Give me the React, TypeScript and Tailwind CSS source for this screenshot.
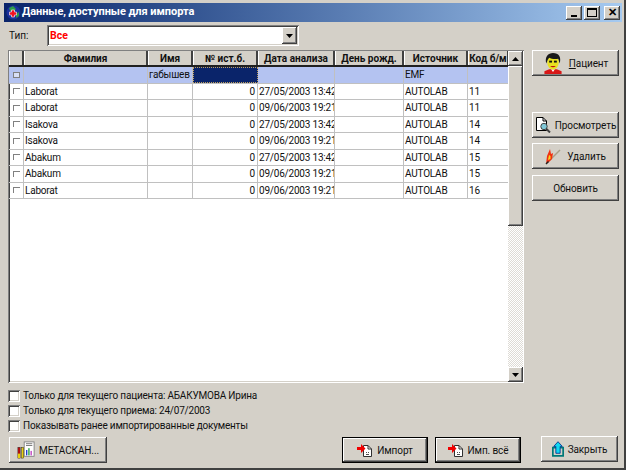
const raised =
  "shadow-[inset_-1px_-1px_0_#404040,inset_1px_1px_0_#ffffff,inset_-2px_-2px_0_#808080]";
const sunken =
  "shadow-[inset_1px_1px_0_#808080,inset_-1px_-1px_0_#ffffff,inset_2px_2px_0_#404040,inset_-2px_-2px_0_#d4d0c8]";

const columnGrid = "grid grid-cols-[15px_124px_45px_65px_77px_69px_64px_41px]";

const columns = ["", "Фамилия", "Имя", "№ ист.б.", "Дата анализа", "День рожд.", "Источник", "Код б/м"];

const rows = [
  ["Laborat", "27/05/2003 13:42:", "11"],
  ["Laborat", "09/06/2003 19:21:", "11"],
  ["Isakova", "27/05/2003 13:42:", "14"],
  ["Isakova", "09/06/2003 19:21:", "14"],
  ["Abakum", "27/05/2003 13:42:", "15"],
  ["Abakum", "09/06/2003 19:21:", "15"],
  ["Laborat", "09/06/2003 19:21:", "16"],
];

function AppIcon() {
  return (
    <svg width="15" height="15" viewBox="0 0 15 15" className="shrink-0">
      <circle cx="7.5" cy="7.5" r="7" fill="#1a2f9c" />
      <path d="M3 3 L7 1 L10 4 L8 6 L4 6 Z" fill="#2f9a4a" />
      <path d="M10 9 L13 7 L13 11 L10 13 Z" fill="#2f9a4a" />
      <path d="M5.5 5 h3 v2 h2 v3 h-2 v2 h-3 v-2 h-2 v-3 h2 Z" fill="#f01020" stroke="#ffffff" strokeWidth="0.6" />
    </svg>
  );
}

function FaceIcon() {
  return (
    <svg width="20" height="21" viewBox="0 0 20 22" className="shrink-0">
      <path d="M1 22 V19 L6 17 H14 L19 19 V22 Z" fill="#d81818" />
      <path d="M8 17 L10 20 L12 17 Z" fill="#ffffff" />
      <ellipse cx="10" cy="10" rx="6" ry="7.5" fill="#e8e020" />
      <path d="M3 11 C1 4 5 0 10 0 C16 0 19 4 17 11 L15.5 6 C12 7 8 6 6 5 L4.5 7 Z" fill="#1a1a1a" />
      <rect x="6" y="8" width="3" height="2" fill="#111111" />
      <rect x="11" y="8" width="3" height="2" fill="#111111" />
      <path d="M7 13.5 Q10 16.5 13 13.5 Z" fill="#c01010" />
    </svg>
  );
}

function ViewIcon() {
  return (
    <svg width="16" height="16" viewBox="0 0 16 16" className="shrink-0">
      <path d="M1.5 0.5 H8 L11.5 4 V13.5 H1.5 Z" fill="#ffffff" stroke="#000000" />
      <path d="M8 0.5 V4 H11.5" fill="none" stroke="#000000" />
      <circle cx="9" cy="9.5" r="3.2" fill="#7fc8d8" stroke="#404040" />
      <path d="M11.5 12 L15 15.5" stroke="#404040" strokeWidth="2" />
    </svg>
  );
}

function MatchIcon() {
  return (
    <svg width="16" height="18" viewBox="0 0 16 18" className="shrink-0">
      <path d="M5 13 L15 3" stroke="#a8a088" strokeWidth="1.4" />
      <path d="M1 17 L2 9 L5 2 L6 7 L8 6 L7 12 L4 15 Z" fill="#f03010" />
      <path d="M3 13 L4 8 L5.5 9 L5.5 12 Z" fill="#f8d820" />
      <path d="M1 17 L3.5 14.5" stroke="#202020" strokeWidth="1.4" />
    </svg>
  );
}

function ImportIcon() {
  return (
    <svg width="16" height="14" viewBox="0 0 16 14" className="shrink-0">
      <path d="M6.5 2.5 H11 L14.5 6 V13.5 H6.5 Z" fill="#ffffff" stroke="#303030" />
      <path d="M11 2.5 V6 H14.5" fill="none" stroke="#303030" />
      <path d="M9 9 h1 v1 h-1 Z M11 9 h1 v1 h-1 Z M9 11 h3 v1 h-3 Z" fill="#505050" />
      <path d="M0 4 H4 V1 L8.5 5.5 L4 10 V7 H0 Z" fill="#f00000" />
    </svg>
  );
}

function ChartIcon() {
  return (
    <svg width="18" height="18" viewBox="0 0 20 20" className="shrink-0">
      <rect x="8" y="1" width="11" height="16" fill="#ffffff" stroke="#808080" />
      <path d="M10 3 H17 M10 5 H17" stroke="#707070" />
      <rect x="10" y="10" width="1.5" height="6" fill="#2040d0" />
      <rect x="12.5" y="8" width="1.5" height="8" fill="#20a040" />
      <rect x="15" y="11" width="1.5" height="5" fill="#c040c0" />
      <rect x="1" y="7" width="2.5" height="12" fill="#c01010" stroke="#202020" strokeWidth="0.5" />
      <rect x="5" y="7" width="2.5" height="12" fill="#e8d010" stroke="#202020" strokeWidth="0.5" />
      <rect x="1" y="14" width="2.5" height="5" fill="#e8d010" />
    </svg>
  );
}

function CloseIcon() {
  return (
    <svg width="12" height="16" viewBox="0 0 14 18" className="shrink-0">
      <path d="M1 7.5 H13 V17 H1 Z" fill="#d4d0c8" stroke="#007878" strokeWidth="2" />
      <path d="M7 0.5 L12 6 H9.5 V14 H4.5 V6 H2 Z" fill="#10d8f0" stroke="#003090" />
    </svg>
  );
}

function Button({
  children,
  className,
  strong,
}: {
  children: React.ReactNode;
  className: string;
  strong?: boolean;
}) {
  return (
    <button
      type="button"
      className={`flex h-[26px] items-center justify-center gap-1 bg-[#d4d0c8] text-[10px] tracking-[-0.1px] text-[#111111] ${raised} ${
        strong ? "border border-black" : ""
      } ${className}`}
    >
      {children}
    </button>
  );
}

function CaptionButton({ children }: { children: React.ReactNode }) {
  return (
    <div className={`flex h-[14px] w-[16px] items-center justify-center bg-[#d4d0c8] ${raised}`}>{children}</div>
  );
}

function ScrollButton({ up }: { up?: boolean }) {
  return (
    <div className={`flex h-[15px] w-[15px] shrink-0 items-center justify-center bg-[#d4d0c8] ${raised}`}>
      <svg width="7" height="4" viewBox="0 0 7 4">
        <path d={up ? "M3.5 0 L7 4 H0 Z" : "M0 0 H7 L3.5 4 Z"} fill="#000000" />
      </svg>
    </div>
  );
}

function Check({ label }: { label: string }) {
  return (
    <div className="flex h-[15px] items-center gap-[3px]">
      <div className={`h-[12px] w-[12px] bg-white ${sunken}`} />
      <span className="text-[10px] tracking-[-0.2px] text-[#111111]">{label}</span>
    </div>
  );
}

function RowMark({ active }: { active?: boolean }) {
  return (
    <div
      className={`h-[6px] w-[7px] border-l border-t border-[#808080] ${
        active ? "border-r border-b bg-[#d8dff5]" : ""
      }`}
    />
  );
}

const cell =
  "flex items-center overflow-hidden whitespace-nowrap border-r border-[#c0c0c0] px-[1px] text-[10px] tracking-[-0.2px]";

export default function App() {
  return (
    <div className="flex h-[470px] w-[626px] flex-col overflow-hidden border-b-2 border-r-2 border-b-[#404040] border-r-[#404040] bg-[#d4d0c8] pl-[4px] pr-[2px] pt-[3px] font-['Roboto',sans-serif]">
      <div className="flex h-[19px] shrink-0 items-center gap-[2px] bg-gradient-to-r from-[#0a246a] to-[#a6caf0] pl-[2px] pr-[2px]">
        <AppIcon />
        <span className="ml-[-1px] flex-1 text-[11px] font-bold tracking-[-0.05px] text-white">
          Данные, доступные для импорта
        </span>
        <CaptionButton>
          <div className="mt-[7px] h-[2px] w-[6px] bg-black" />
        </CaptionButton>
        <CaptionButton>
          <div className="h-[9px] w-[10px] border border-t-2 border-black" />
        </CaptionButton>
        <div className="ml-[2px]">
          <CaptionButton>
            <span className="text-[11px] font-bold leading-none text-black">✕</span>
          </CaptionButton>
        </div>
      </div>

      <div className="mt-[3px] flex h-[21px] shrink-0 items-center pl-[5px]">
        <span className="w-[38px] text-[10px] text-[#111111]">Тип:</span>
        <div className={`flex h-[21px] w-[252px] items-center justify-between bg-white p-[2px] ${sunken}`}>
          <span className="pl-[1px] text-[10.5px] font-bold text-[#ff0000]">Все</span>
          <div className={`flex h-[17px] w-[15px] items-center justify-center bg-[#d4d0c8] ${raised}`}>
            <svg width="7" height="4" viewBox="0 0 7 4">
              <path d="M0 0 H7 L3.5 4 Z" fill="#000000" />
            </svg>
          </div>
        </div>
      </div>

      <div className="mt-[4px] flex min-h-0 flex-1">
        <div className="flex w-[528px] shrink-0 flex-col pl-[4px]">
          <div className={`flex h-[333px] w-[516px] bg-white p-[1px] ${sunken}`}>
            <div className="w-[500px] overflow-hidden">
              <div className={`${columnGrid} h-[16px] border-b-2 border-[#202020] bg-[#d4d0c8]`}>
                {columns.map((name, index) => (
                  <div
                    key={index}
                    className="flex items-center justify-center overflow-hidden whitespace-nowrap border-r-2 border-r-[#404040] border-l border-l-white text-[10px] font-bold text-[#111111]"
                  >
                    {name}
                  </div>
                ))}
              </div>
              <div className={`${columnGrid} h-[16.5px] border-b border-[#c0c0c0] bg-[#b4c3f1] text-[#111111]`}>
                <div className={`${cell} justify-center`}>
                  <RowMark active />
                </div>
                <div className={cell} />
                <div className={cell}>габышев и</div>
                <div className="border border-dotted border-[#c0a060] bg-[#0a246a]" />
                <div className={cell} />
                <div className={cell} />
                <div className={cell}>EMF</div>
                <div className={cell} />
              </div>
              {rows.map((row, index) => (
                <div key={index} className={`${columnGrid} h-[16.5px] border-b border-[#c0c0c0] text-[#111111]`}>
                  <div className={`${cell} justify-center`}>
                    <RowMark />
                  </div>
                  <div className={cell}>{row[0]}</div>
                  <div className={cell} />
                  <div className={`${cell} justify-end pr-[2px]`}>0</div>
                  <div className={cell}>{row[1]}</div>
                  <div className={cell} />
                  <div className={cell}>AUTOLAB</div>
                  <div className={cell}>{row[2]}</div>
                </div>
              ))}
            </div>
            <div className="flex w-[15px] shrink-0 flex-col bg-[repeating-conic-gradient(#ffffff_0_25%,#dedbd5_0_50%)] bg-[length:2px_2px]">
              <ScrollButton up />
              <div className={`h-[160px] bg-[#d4d0c8] ${raised}`} />
              <div className="flex-1" />
              <ScrollButton />
            </div>
          </div>

          <div className="mt-[5px] flex flex-col">
            <Check label="Только для текущего пациента: АБАКУМОВА Ирина" />
            <Check label="Только для текущего приема: 24/07/2003" />
            <Check label="Показывать ранее импортированные документы" />
          </div>

          <div className="mt-[4px] flex items-center">
            <Button className="ml-[1px] w-[98px]">
              <ChartIcon />
              МЕТАСКАН...
            </Button>
            <Button strong className="ml-[235px] w-[86px]">
              <ImportIcon />
              Импорт
            </Button>
            <Button strong className="ml-[7px] w-[86px]">
              <ImportIcon />
              Имп. всё
            </Button>
          </div>
        </div>

        <div className="flex flex-1 flex-col pb-[6px]">
          <Button className="w-[87px]">
            <FaceIcon />
            <span className="ml-[2px]">
              <span className="underline">П</span>ациент
            </span>
          </Button>
          <Button className="mt-[36px] w-[87px]">
            <ViewIcon />
            Просмотреть
          </Button>
          <Button className="mt-[5px] w-[87px]">
            <MatchIcon />
            <span className="ml-[2px]">Удалить</span>
          </Button>
          <Button className="mt-[6px] h-[25px] w-[87px]">Обновить</Button>
          <div className="flex-1" />
          <Button className="ml-[9px] w-[77px]">
            <CloseIcon />
            Закрыть
          </Button>
        </div>
      </div>
    </div>
  );
}
